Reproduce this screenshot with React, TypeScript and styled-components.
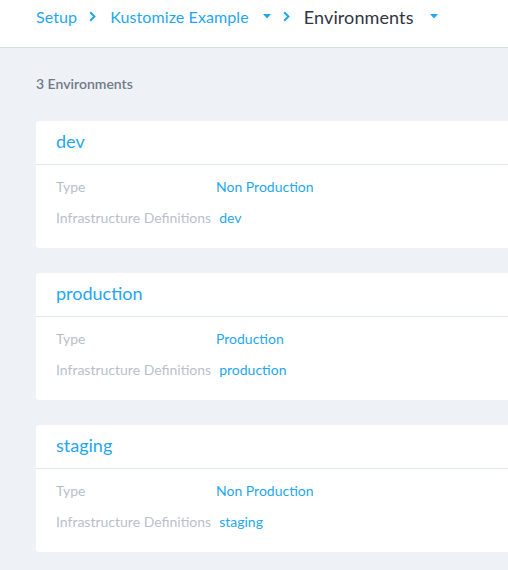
import React from "react";
import styled, { createGlobalStyle } from "styled-components";

const Global = createGlobalStyle`
  html, body { margin: 0; padding: 0; background: #eef1f5; }
  body { font-family: Lato, "Noto Sans", sans-serif; }
`;

const Page = styled.div`
  width: 508px;
  height: 570px;
  overflow: hidden;
  background: #eef1f5;
`;

const Header = styled.header`
  height: 48px;
  background: #fff;
  border-bottom: 1px solid #d9dee6;
  display: flex;
  align-items: center;
  padding: 0 0 14px 36px;
  box-sizing: border-box;
  white-space: nowrap;
`;

const Crumb = styled.span<{ $current?: boolean }>`
  font-size: ${(p) => (p.$current ? "18px" : "16px")};
  color: ${(p) => (p.$current ? "#2f3542" : "#1fa7f3")};
  letter-spacing: 0.1px;
`;

const Sep = styled.svg`
  margin: 0 14px 0 12px;
  flex: none;
`;

const Caret = styled.svg<{ $ml: number }>`
  margin-left: ${(p) => p.$ml}px;
  flex: none;
`;

const Content = styled.main`
  padding: 28px 0 0 36px;
`;

const Count = styled.div`
  font-size: 14px;
  font-weight: 600;
  color: #717a89;
  height: 16px;
  line-height: 16px;
  margin-bottom: 29px;
`;

const List = styled.div`
  display: flex;
  flex-direction: column;
  gap: 25px;
`;

const Card = styled.section`
  background: #fff;
  border-radius: 3px 0 0 3px;
  height: 127px;
  display: flex;
  flex-direction: column;
`;

const CardHeader = styled.div`
  height: 44px;
  border-bottom: 1px solid #e3e7ee;
  display: flex;
  align-items: center;
  padding: 0 0 3px 20px;
  box-sizing: border-box;
  font-size: 18px;
  color: #1fa7f3;
`;

const CardBody = styled.div`
  padding: 11px 0 0 20px;
  display: flex;
  flex-direction: column;
  gap: 11px;
`;

const Row = styled.div`
  display: flex;
  align-items: center;
  height: 20px;
  font-size: 14px;
`;

const Label = styled.span`
  min-width: 160px;
  padding-right: 8px;
  box-sizing: border-box;
  color: #b9bfca;
`;

const Value = styled.span`
  color: #1fa7f3;
`;

const Chevron = () => (
  <Sep width="7" height="11" viewBox="0 0 7 11">
    <path d="M1.2 1.2 L5.4 5.5 L1.2 9.8" fill="none" stroke="#1fa7f3" strokeWidth="2" />
  </Sep>
);

const Down = ({ ml }: { ml: number }) => (
  <Caret $ml={ml} width="8" height="5" viewBox="0 0 8 5">
    <path d="M0 0 H8 L4 4.5 Z" fill="#1fa7f3" />
  </Caret>
);

const envs = [
  { name: "dev", type: "Non Production" },
  { name: "production", type: "Production" },
  { name: "staging", type: "Non Production" },
];

export default function App() {
  return (
    <Page>
      <Global />
      <Header>
        <Crumb>Setup</Crumb>
        <Chevron />
        <Crumb>Kustomize Example</Crumb>
        <Down ml={14} />
        <Chevron />
        <Crumb $current>Environments</Crumb>
        <Down ml={16} />
      </Header>
      <Content>
        <Count>3 Environments</Count>
        <List>
          {envs.map((e) => (
            <Card key={e.name}>
              <CardHeader>{e.name}</CardHeader>
              <CardBody>
                <Row>
                  <Label>Type</Label>
                  <Value>{e.type}</Value>
                </Row>
                <Row>
                  <Label>Infrastructure Definitions</Label>
                  <Value>{e.name}</Value>
                </Row>
              </CardBody>
            </Card>
          ))}
        </List>
      </Content>
    </Page>
  );
}
